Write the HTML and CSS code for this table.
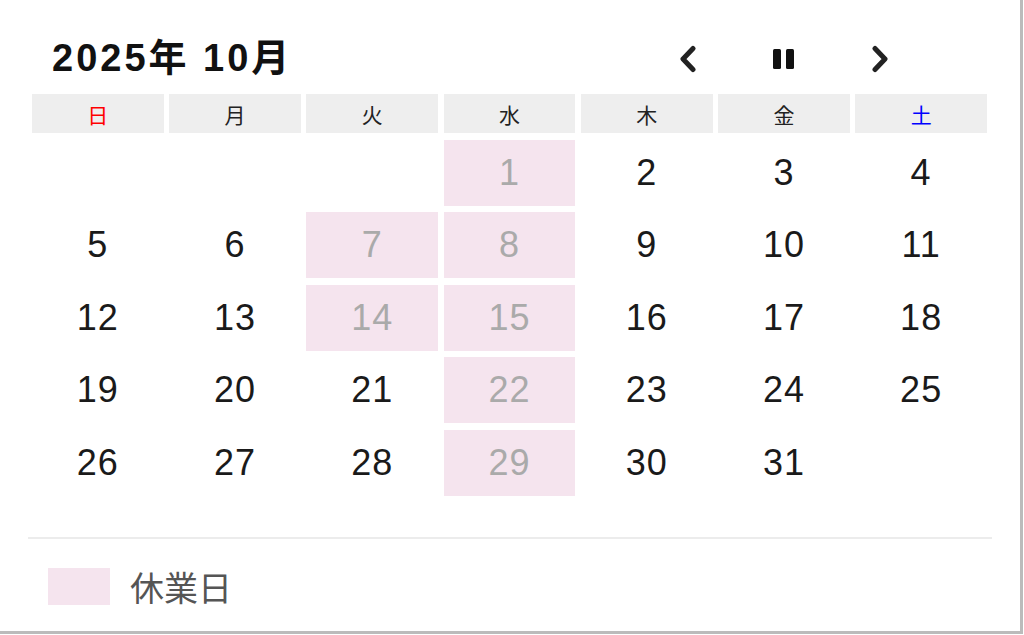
FILE: index.html
```html
<!DOCTYPE html>
<html>
    <head>
        <meta http-equiv="Content-type" content="text/html; charset=utf-8" />
        <link rel="stylesheet" href="styles.css">
        <title>営業カレンダー</title>
    </head>
    <body>
        <div class="calendar">
            <div class="head">
                <div class="title">2025年 10月</div>
                <div class="nav">
                    <button class="navBtn">
                        <svg width="22" height="28" viewBox="0 0 22 28"><path d="M16 3.5 L6 14 L16 24.5" fill="none" stroke="#222" stroke-width="5" stroke-linecap="round" stroke-linejoin="round"/></svg>
                    </button>
                    <button class="navBtn">
                        <svg width="24" height="22" viewBox="0 0 24 22"><rect x="1" y="1" width="8" height="20" rx="1.5" fill="#111"/><rect x="14" y="1" width="8" height="20" rx="1.5" fill="#111"/></svg>
                    </button>
                    <button class="navBtn">
                        <svg width="22" height="28" viewBox="0 0 22 28"><path d="M6 3.5 L16 14 L6 24.5" fill="none" stroke="#222" stroke-width="5" stroke-linecap="round" stroke-linejoin="round"/></svg>
                    </button>
                </div>
            </div>
            <div class="grid">
                <div class="wd sun">日</div>
                <div class="wd">月</div>
                <div class="wd">火</div>
                <div class="wd">水</div>
                <div class="wd">木</div>
                <div class="wd">金</div>
                <div class="wd sat">土</div>

                <div class="day"></div>
                <div class="day"></div>
                <div class="day"></div>
                <div class="day off">1</div>
                <div class="day">2</div>
                <div class="day">3</div>
                <div class="day">4</div>

                <div class="day">5</div>
                <div class="day">6</div>
                <div class="day off">7</div>
                <div class="day off">8</div>
                <div class="day">9</div>
                <div class="day">10</div>
                <div class="day">11</div>

                <div class="day">12</div>
                <div class="day">13</div>
                <div class="day off">14</div>
                <div class="day off">15</div>
                <div class="day">16</div>
                <div class="day">17</div>
                <div class="day">18</div>

                <div class="day">19</div>
                <div class="day">20</div>
                <div class="day">21</div>
                <div class="day off">22</div>
                <div class="day">23</div>
                <div class="day">24</div>
                <div class="day">25</div>

                <div class="day">26</div>
                <div class="day">27</div>
                <div class="day">28</div>
                <div class="day off">29</div>
                <div class="day">30</div>
                <div class="day">31</div>
                <div class="day"></div>
            </div>
            <hr class="divider" />
            <div class="legend">
                <span class="swatch"></span>
                <span class="legendText">休業日</span>
            </div>
        </div>
    </body>
</html>
```

FILE: styles.css
```css
body, html {
    background-color: white;
    font-family: "Liberation Sans", "Noto Sans CJK JP", sans-serif;
    margin: 0px;
    padding: 0px;
}
.calendar {
    box-sizing: border-box;
    width: 1023px;
    height: 634px;
    border-right: 3px solid #bbb;
    border-bottom: 3px solid #bbb;
    padding: 26px 33px 0px 32px;
}
.head {
    display: flex;
    align-items: center;
    justify-content: space-between;
    height: 60px;
    margin-bottom: 8px;
}
.title {
    margin-left: 20px;
    margin-bottom: 4px;
    font-size: 38px;
    font-weight: bold;
    letter-spacing: 3px;
    color: #111;
}
.nav {
    display: flex;
    margin-right: 59px;
    margin-top: 6px;
}
.navBtn {
    width: 96px;
    height: 40px;
    padding: 0px;
    border: none;
    background: none;
    display: flex;
    align-items: center;
    justify-content: center;
}
.navBtn:hover {
    cursor: pointer;
}
.grid {
    display: grid;
    grid-template-columns: repeat(7, 1fr);
    grid-template-rows: 39px repeat(5, 66px);
    column-gap: 5.5px;
    row-gap: 6.5px;
}
.wd {
    background-color: #eeeeee;
    display: flex;
    align-items: center;
    justify-content: center;
    font-family: "Noto Sans CJK JP", sans-serif;
    font-size: 21px;
    color: #222;
}
.wd.sun {
    color: #ff0000;
}
.wd.sat {
    color: #0000ff;
}
.day {
    display: flex;
    align-items: center;
    justify-content: center;
    font-size: 36px;
    letter-spacing: 1px;
    color: #1a1a1a;
}
.day.off {
    background-color: #f5e4ee;
    color: #aaaaaa;
}
.divider {
    border: none;
    height: 2px;
    background-color: #ececec;
    margin: 41px -5px 0px -4px;
}
.legend {
    display: flex;
    align-items: center;
    margin-top: 23px;
    margin-left: 16px;
}
.swatch {
    width: 62px;
    height: 37px;
    background-color: #f5e4ee;
}
.legendText {
    margin-left: 20px;
    font-family: "Noto Sans CJK JP", sans-serif;
    font-size: 34px;
    color: #555;
}
```
